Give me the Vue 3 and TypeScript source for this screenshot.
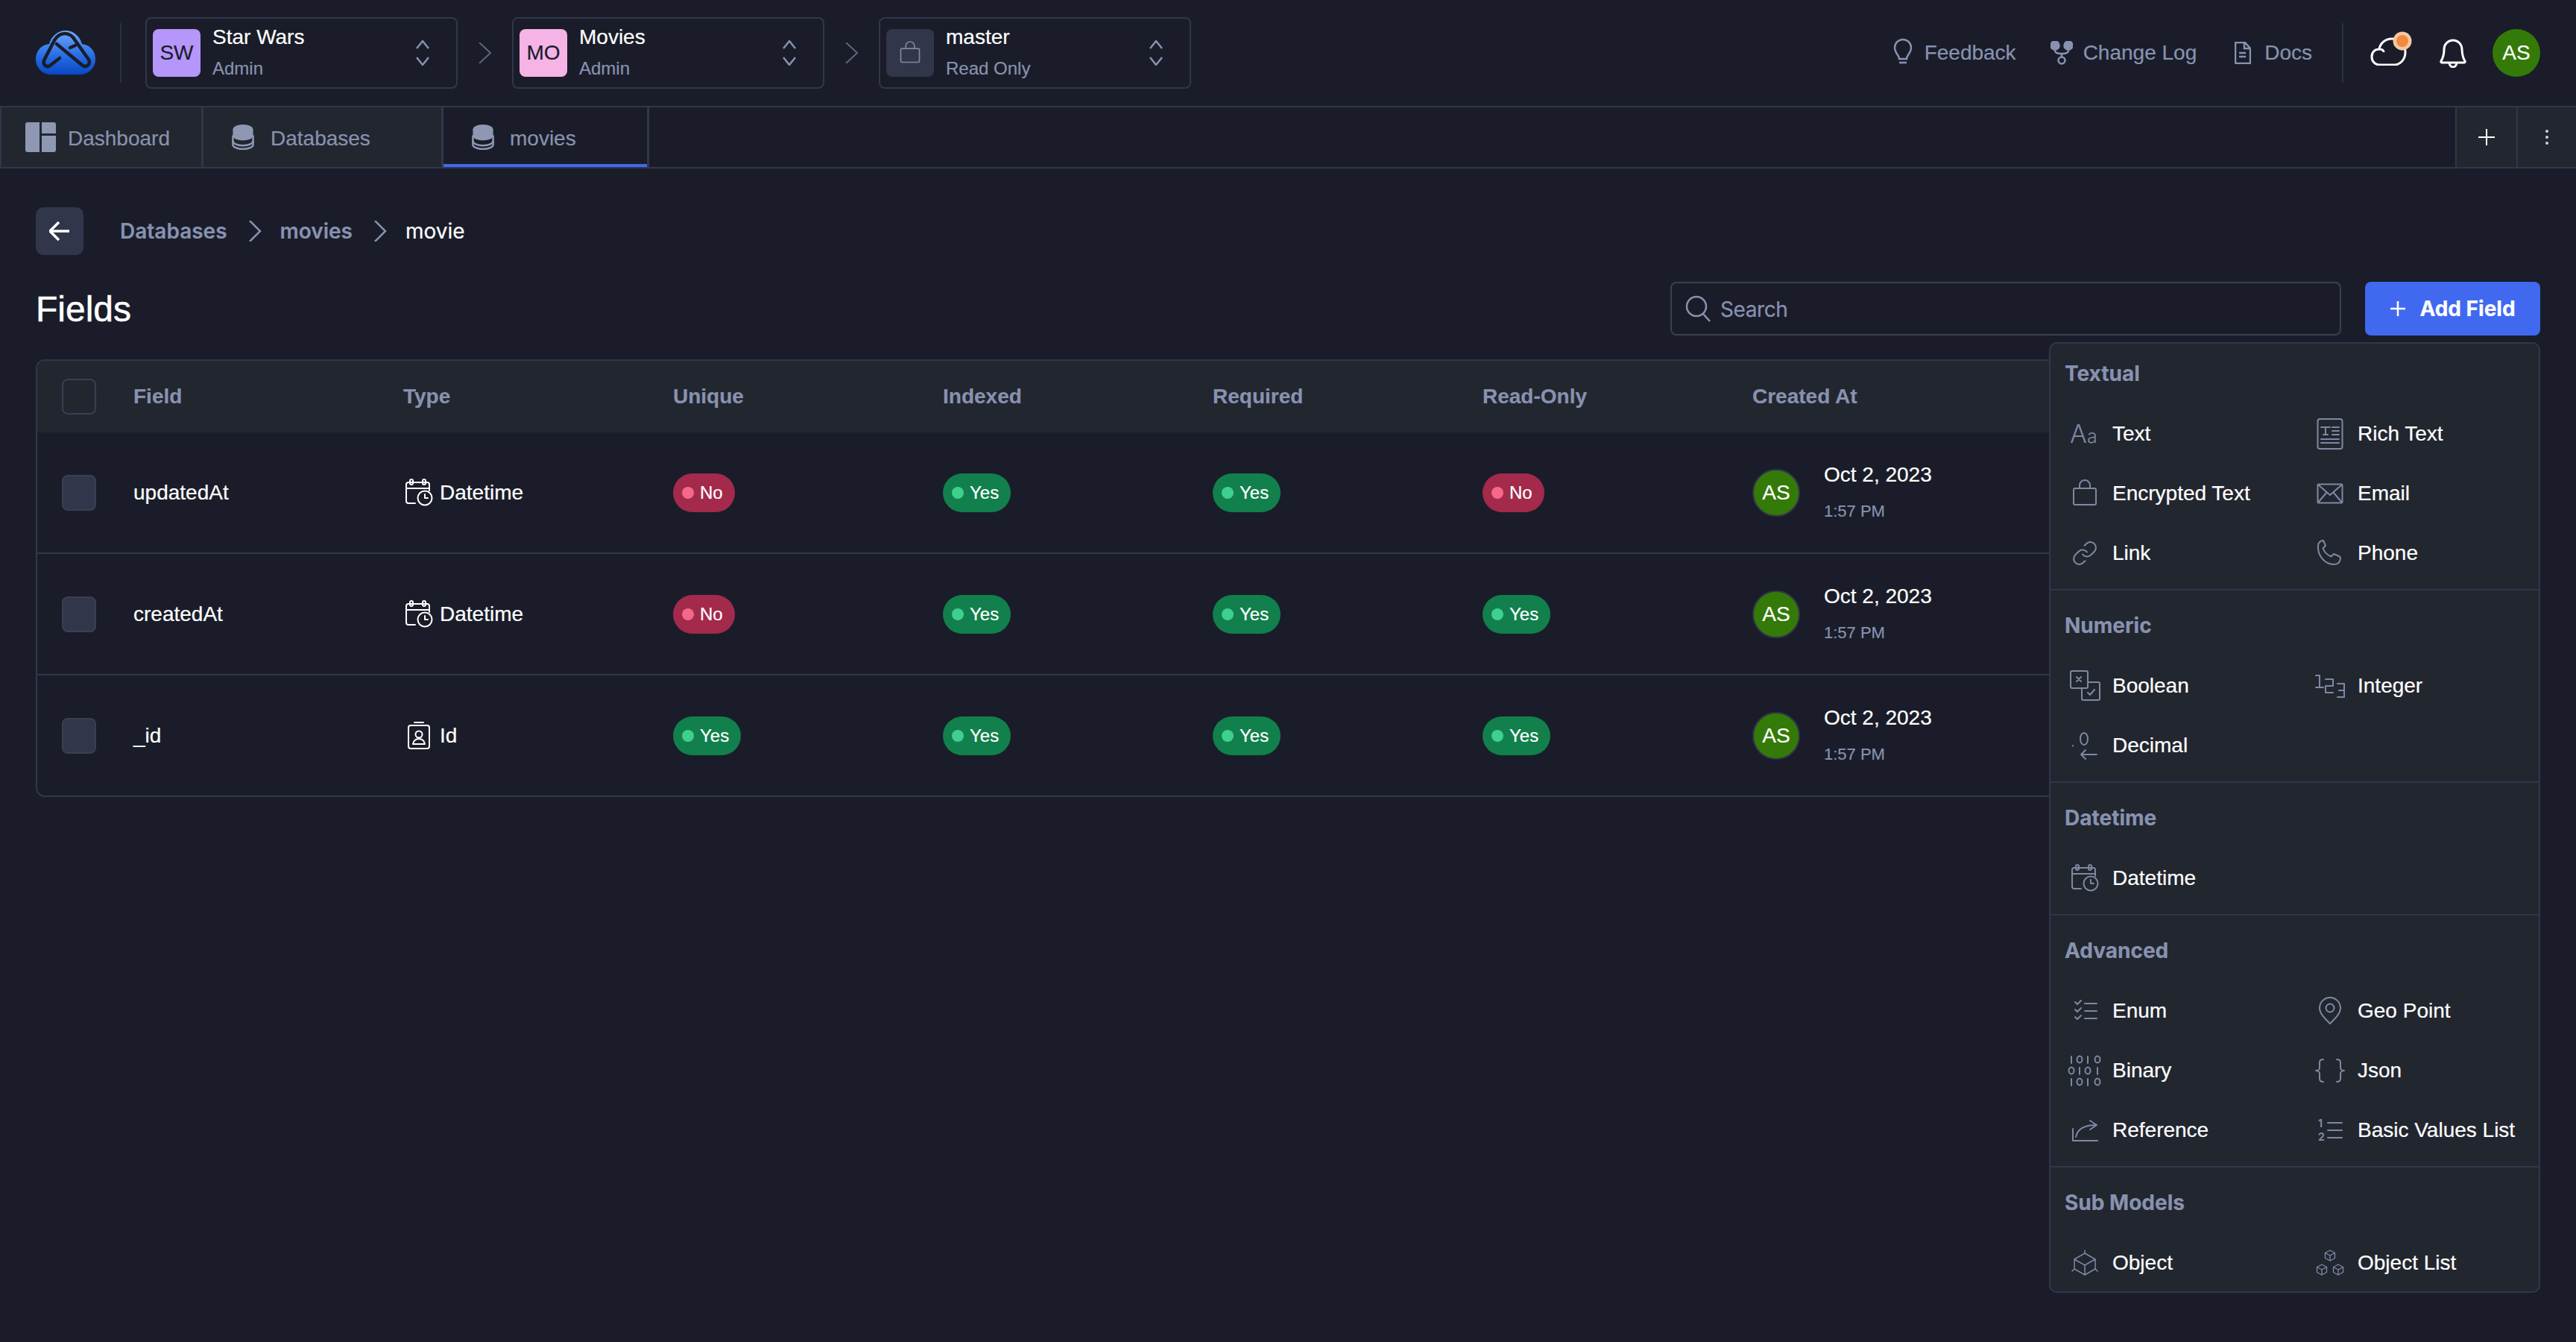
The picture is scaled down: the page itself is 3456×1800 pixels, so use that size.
<script setup lang="ts">
interface Select { badge: string; name: string; role: string; tone: string }
interface Row { name: string; type: string; icon: string; flags: boolean[] }
interface Item { label: string; icon: string }
interface Section { title: string; items: Item[] }

const selects: Select[] = [
  { badge: "SW", name: "Star Wars", role: "Admin", tone: "#b596fb" },
  { badge: "MO", name: "Movies", role: "Admin", tone: "#f5b3e6" },
  { badge: "", name: "master", role: "Read Only", tone: "#31364a" },
];

const columns = ["Field", "Type", "Unique", "Indexed", "Required", "Read-Only", "Created At"];

const rows: Row[] = [
  { name: "updatedAt", type: "Datetime", icon: "datetime", flags: [false, true, true, false] },
  { name: "createdAt", type: "Datetime", icon: "datetime", flags: [false, true, true, true] },
  { name: "_id", type: "Id", icon: "id", flags: [true, true, true, true] },
];

const sections: Section[] = [
  {
    title: "Textual",
    items: [
      { label: "Text", icon: "text" },
      { label: "Rich Text", icon: "rich" },
      { label: "Encrypted Text", icon: "lock" },
      { label: "Email", icon: "email" },
      { label: "Link", icon: "link" },
      { label: "Phone", icon: "phone" },
    ],
  },
  {
    title: "Numeric",
    items: [
      { label: "Boolean", icon: "boolean" },
      { label: "Integer", icon: "integer" },
      { label: "Decimal", icon: "decimal" },
    ],
  },
  { title: "Datetime", items: [{ label: "Datetime", icon: "datetime" }] },
  {
    title: "Advanced",
    items: [
      { label: "Enum", icon: "enum" },
      { label: "Geo Point", icon: "geo" },
      { label: "Binary", icon: "binary" },
      { label: "Json", icon: "json" },
      { label: "Reference", icon: "reference" },
      { label: "Basic Values List", icon: "list" },
    ],
  },
  {
    title: "Sub Models",
    items: [
      { label: "Object", icon: "object" },
      { label: "Object List", icon: "objects" },
    ],
  },
];

const cube = (x: number, y: number) =>
  `<path d="M${x} ${y - 7}l6.5 3.5v7l-6.5 3.5-6.5-3.5v-7zM${x - 6.5} ${y - 3.5}l6.5 3.5 6.5-3.5M${x} ${y}v7"/>`;

// 48x48 icon bodies for the field types
const icons: Record<string, string> = {
  text: `<text x="4" y="36" class="glyph" font-size="34">A</text><text x="27" y="36" class="glyph" font-size="25">a</text>`,
  rich: `<rect x="7.5" y="4" width="33" height="40" rx="3"/><path d="M12 15h12M18 15v10M15 25h6M27 15h9M27 20h9M27 25h9M12 31h24M12 36h24"/>`,
  lock: `<rect x="9" y="17" width="30" height="22" rx="2"/><path d="M17 17v-4a7 7 0 0 1 14 0v4"/>`,
  email: `<rect x="7.5" y="11.5" width="33" height="25" rx="1"/><path d="M8 12l16 14 16-14M8 36l11-13M40 36L29 23"/>`,
  link: `<g transform="translate(6 6) scale(1.5)" stroke-width="1.33"><path d="M10 13a5 5 0 0 0 7.54.54l3-3a5 5 0 0 0-7.07-7.07l-1.72 1.71"/><path d="M14 11a5 5 0 0 0-7.54-.54l-3 3a5 5 0 0 0 7.07 7.07l1.71-1.71"/></g>`,
  phone: `<path d="M15 7l3 7-3.5 3.5c2 5 6 9 11 11l3.500-3.500 7 3c1 .5 2 1.500 2 3-.5 5-4 8-9 8C17 39 7 27 8 14c0-4 3-7 7-7z"/>`,
  boolean: `<rect x="5" y="4" width="23" height="23" rx="2"/><path d="M13 12l6 6M19 12l-6 6M28 19h14a2 2 0 0 1 2 2v20a2 2 0 0 1-2 2H22a2 2 0 0 1-2-2V27M28 33l3 3 6-7"/>`,
  integer: `<path d="M5 10h5v15M5 26h10M18 15h10v9H18v9h10M34 21h9v18h-9M36 30h7"/>`,
  decimal: `<ellipse cx="23" cy="15" rx="5" ry="8"/><path d="M8 24v.5M40 36H19M25 30l-6 6 6 6"/>`,
  datetime: `<path d="M19 38h-9a3 3 0 0 1-3-3V13a3 3 0 0 1 3-3h25a3 3 0 0 1 3 3v8M7 18h31M19 10h7"/><rect x="12" y="6" width="4" height="7" rx="2"/><rect x="29" y="6" width="4" height="7" rx="2"/><circle cx="32" cy="31" r="9.500"/><path d="M32 26v5h4"/>`,
  id: `<rect x="10" y="10" width="28" height="31" rx="3"/><path d="M18 6h12"/><circle cx="24" cy="22" r="4.500"/><path d="M16 35c1-5 4-7 8-7s7 2 8 7z"/>`,
  enum: `<path d="M24 14h16M24 24h16M24 34h16M11 12l3 3 5-5M11 22l3 3 5-5M11 32l3 3 5-5"/>`,
  geo: `<path d="M24 41C16 33 10 27 10 20a14 14 0 0 1 28 0c0 7-6 13-14 21z"/><circle cx="24" cy="20" r="5.500"/>`,
  binary: `<path d="M6 5v9M28 5v9M17 20v9M41 20v9M6 35v9M28 35v9"/><ellipse cx="17" cy="9" rx="3.500" ry="4.500"/><ellipse cx="41" cy="9" rx="3.500" ry="4.500"/><ellipse cx="6" cy="24" rx="3.500" ry="4.500"/><ellipse cx="28" cy="24" rx="3.500" ry="4.500"/><ellipse cx="17" cy="39" rx="3.500" ry="4.500"/><ellipse cx="41" cy="39" rx="3.500" ry="4.500"/>`,
  json: `<path d="M15 9c-3 0-5 1-5 4v7c0 2-2 4-5 4 3 0 5 2 5 4v7c0 3 2 4 5 4M33 9c3 0 5 1 5 4v7c0 2 2 4 5 4-3 0-5 2-5 4v7c0 3-2 4-5 4"/>`,
  reference: `<path d="M8 22v16h33M12 33c2-10 10-16 27-16M31 11l9 6-9 6"/>`,
  list: `<text x="8" y="20" class="digit" font-size="14">1</text><text x="8" y="38" class="digit" font-size="14">2</text><path d="M21 14h19M21 24h19M21 34h19"/>`,
  object: `<g stroke-width="1.500"><path d="M24 11l14 8v13l-14 8-14-8V19zM10 19l14 8 14-8M24 27v13M24 7v4M7 35l3-3M41 35l-3-3"/></g>`,
  objects: `<g stroke-width="1.300">${cube(24, 14)}${cube(13, 33)}${cube(35, 33)}</g>`,
};

const database = `<path class="db-top" d="M1 7c0-4 6-7 14-7s14 3 14 7v9c0 3-6 6-14 6S1 19 1 16z"/><path class="db-band" d="M1 15v8c0 3 6 6 14 6s14-3 14-6v-8"/><path class="db-band" d="M1 22v6c0 3 6 6 14 6s14-3 14-6v-6"/>`;
</script>

<template>
  <div class="page">
    <header class="topbar">
      <svg class="logo" width="80" height="60" viewBox="0 0 80 60">
        <defs>
          <linearGradient id="cloud-fill" x1="0" y1="0" x2="0" y2="1">
            <stop offset="0" stop-color="#6ea8fb" />
            <stop offset="0.55" stop-color="#2a6fe6" />
            <stop offset="1" stop-color="#0747c5" />
          </linearGradient>
        </defs>
        <path
          fill="url(#cloud-fill)"
          d="M18 18C21 7 30 0 40 0s19 7 22 18c10 1 18 9 18 20 0 12-9 21-21 21H21C9 59 0 50 0 38c0-11 8-19 18-20z"
        />
        <path
          fill="none"
          stroke="#1a1d29"
          stroke-width="4.500"
          stroke-linecap="round"
          stroke-linejoin="round"
          d="M32 37L19 47c-4 3-10-1-8-7L25 13c3-5 8-9 14-9s11 4 13 8l19 27c3 6-3 11-8 8L28 18M46 23l7-3"
        />
      </svg>
      <span class="rule"></span>
      <template v-for="(sel, i) in selects" :key="sel.name">
        <svg v-if="i > 0" class="crumb-sep" width="73" height="28" viewBox="0 0 73 28">
          <path d="M29 0l15 14-15 14" />
        </svg>
        <div class="select">
          <span class="select-badge" :style="{ background: sel.tone }">
            {{ sel.badge }}
            <svg v-if="!sel.badge" width="40" height="40" viewBox="0 0 48 48" class="field-icon">
              <g v-html="icons.lock"></g>
            </svg>
          </span>
          <div class="select-text">
            <span class="select-name">{{ sel.name }}</span>
            <span class="select-role">{{ sel.role }}</span>
          </div>
          <svg class="updown" width="18" height="34" viewBox="0 0 18 34">
            <path d="M1 11l8-10 8 10M1 23l8 10 8-10" />
          </svg>
        </div>
      </template>

      <nav class="top-links">
        <a class="top-link">
          <svg width="26" height="40" viewBox="0 0 26 40" class="link-icon">
            <path d="M8 28c0-5-6-8-6-15a11 11 0 0 1 22 0c0 7-6 10-6 15zM8 33h10" />
          </svg>
          Feedback
        </a>
        <a class="top-link top-link-log">
          <svg width="30" height="32" viewBox="0 0 30 32" class="link-icon">
            <circle cx="6" cy="6" r="5.500" fill="currentColor" />
            <circle cx="24" cy="6" r="5.500" fill="currentColor" />
            <circle cx="15" cy="26" r="4.500" />
            <path d="M6 10v3c0 3 3 4 9 4s9-1 9-4v-3M15 17v5" />
          </svg>
          Change Log
        </a>
        <a class="top-link top-link-docs">
          <svg width="22" height="30" viewBox="0 0 22 30" class="link-icon">
            <path d="M2 1h12l7 8v19a1 1 0 0 1-1 1H2a1 1 0 0 1-1-1V2a1 1 0 0 1 1-1zM13 1v8h8M6 15h9M6 20h9" />
          </svg>
          Docs
        </a>
      </nav>
      <span class="rule rule-right"></span>
      <svg class="cloud" width="56" height="46" viewBox="0 0 56 46">
        <path d="M13 45C6 45 2 40 2 34c0-6 4-10 10-10 1-7 7-14 17-14 9 0 18 7 18 18 0 10-7 17-15 17zM13 24c3 0 5 2 5 4" />
        <circle class="cloud-halo" cx="43" cy="13" r="12.500" />
        <circle class="cloud-dot" cx="43" cy="13" r="8" />
      </svg>
      <svg class="bell" width="38" height="40" viewBox="0 0 38 40">
        <path d="M7 15a12 12 0 0 1 24 0c0 8 1 11 4 16 .5 1 0 2-1 2H4c-1 0-1.500-1-1-2 3-5 4-8 4-16zM14 33c0 4 3 6 5 6s5-2 5-6" />
      </svg>
      <span class="avatar avatar-top">AS</span>
    </header>

    <div class="tabs">
      <div class="tab tab-dash">
        <svg width="41" height="40" viewBox="0 0 41 40">
          <path class="tab-fill" d="M3 0h16v40H3a3 3 0 0 1-3-3V3a3 3 0 0 1 3-3zM22 0h16a3 3 0 0 1 3 3v12H22zM22 18h19v19a3 3 0 0 1-3 3H22z" />
        </svg>
        <span class="tab-label">Dashboard</span>
      </div>
      <div class="tab tab-db">
        <svg width="30" height="34" viewBox="0 0 30 35" v-html="database"></svg>
        <span class="tab-label">Databases</span>
      </div>
      <div class="tab tab-active">
        <svg width="30" height="34" viewBox="0 0 30 35" v-html="database"></svg>
        <span class="tab-label">movies</span>
      </div>
      <div class="tab-tools">
        <div class="tool tool-plus">
          <svg width="24" height="24" viewBox="0 0 24 24"><path d="M12 1v22M1 12h22" /></svg>
        </div>
        <div class="tool tool-more">
          <svg width="6" height="22" viewBox="0 0 6 22">
            <circle cx="3" cy="3" r="2" /><circle cx="3" cy="11" r="2" /><circle cx="3" cy="19" r="2" />
          </svg>
        </div>
      </div>
    </div>

    <main class="content">
      <div class="crumbs">
        <button class="back">
          <svg width="28" height="26" viewBox="0 0 28 26"><path d="M27 13H2M13 1L1 13l12 12" /></svg>
        </button>
        <span class="crumb">Databases</span>
        <svg class="crumb-chev" width="18" height="28" viewBox="0 0 18 28"><path d="M2 0l14 14L2 28" /></svg>
        <span class="crumb">movies</span>
        <svg class="crumb-chev" width="18" height="28" viewBox="0 0 18 28"><path d="M2 0l14 14L2 28" /></svg>
        <span class="crumb crumb-now">movie</span>
      </div>

      <div class="title-row">
        <h1>Fields</h1>
        <div class="search">
          <svg width="34" height="36" viewBox="0 0 34 36">
            <circle cx="15" cy="15" r="13" /><path d="M24 25l9 10" />
          </svg>
          <span>Search</span>
        </div>
        <div class="add-wrap">
          <button class="add">
            <svg width="22" height="22" viewBox="0 0 22 22"><path d="M11 1v20M1 11h20" /></svg>
            Add Field
          </button>
          <div class="menu">
            <section v-for="section in sections" :key="section.title" class="menu-section">
              <h3>{{ section.title }}</h3>
              <div class="menu-grid">
                <div v-for="item in section.items" :key="item.label" class="menu-item">
                  <svg width="48" height="48" viewBox="0 0 48 48" class="field-icon" v-html="icons[item.icon]"></svg>
                  <span>{{ item.label }}</span>
                </div>
              </div>
            </section>
          </div>
        </div>
      </div>

      <div class="table">
        <div class="table-row table-head">
          <div class="check-cell"><span class="check check-head"></span></div>
          <div v-for="col in columns" :key="col" class="th">{{ col }}</div>
        </div>
        <div v-for="row in rows" :key="row.name" class="table-row table-body">
          <div class="check-cell"><span class="check"></span></div>
          <div class="td">{{ row.name }}</div>
          <div class="td td-type">
            <svg width="48" height="48" viewBox="0 0 48 48" class="type-icon" v-html="icons[row.icon]"></svg>
            {{ row.type }}
          </div>
          <div v-for="(flag, i) in row.flags" :key="i" class="td">
            <span :class="['pill', flag ? 'pill-yes' : 'pill-no']">
              <i class="pill-dot"></i>{{ flag ? "Yes" : "No" }}
            </span>
          </div>
          <div class="td td-created">
            <span class="avatar avatar-row">AS</span>
            <div class="stamp">
              <span class="stamp-date">Oct 2, 2023</span>
              <span class="stamp-time">1:57 PM</span>
            </div>
          </div>
        </div>
      </div>
    </main>
  </div>
</template>

<style>
body {
  background: #1a1d29;
}
.field-icon .glyph {
  font-family: Inter, sans-serif;
  font-weight: 300;
  fill: #7f88a3;
  stroke: none;
}
.field-icon .digit {
  font-family: Inter, sans-serif;
  font-weight: 700;
  fill: #7f88a3;
  stroke: none;
}
.db-top {
  fill: #8f98b2;
}
.db-band {
  fill: none;
  stroke: #8f98b2;
  stroke-width: 2.5;
}
</style>

<style scoped>
.page {
  width: 3456px;
  min-height: 1800px;
  background: #1a1d29;
  color: #fff;
  font-family: "Liberation Sans", Arial, sans-serif;
  font-size: 28px;
  -webkit-text-stroke: 0.2px;
  overflow: hidden;
}

.topbar {
  height: 142px;
  display: flex;
  align-items: center;
  padding: 0 48px;
}
.logo {
  flex: none;
  margin-right: 33px;
}
.rule {
  width: 2px;
  height: 80px;
  background: #2b2f3f;
  flex: none;
  margin-right: 32px;
}
.crumb-sep {
  flex: none;
}
.crumb-sep path {
  fill: none;
  stroke: #5d6681;
  stroke-width: 2;
}
.select {
  width: 419px;
  height: 96px;
  flex: none;
  box-sizing: border-box;
  border: 2px solid #31364a;
  border-radius: 8px;
  display: flex;
  align-items: center;
  padding: 0 36px 0 8px;
}
.select-badge {
  width: 64px;
  height: 64px;
  border-radius: 8px;
  flex: none;
  color: #1a1d29;
  font-size: 28px;
  display: flex;
  align-items: center;
  justify-content: center;
}
.select-text {
  flex: 1;
  display: flex;
  flex-direction: column;
  margin-left: 16px;
  gap: 14px;
  margin-top: -1px;
}
.select-name {
  font-size: 28px;
  line-height: 28px;
}
.select-role {
  font-size: 24px;
  line-height: 28px;
  color: #8892b0;
}
.updown {
  flex: none;
}
.updown path {
  fill: none;
  stroke: #8892b0;
  stroke-width: 2.5;
}

.top-links {
  margin-left: auto;
  display: flex;
  align-items: center;
  gap: 48px;
  margin-right: 40px;
}
.top-link {
  display: flex;
  align-items: center;
  gap: 16px;
  color: #8892b0;
  font-size: 28px;
}
.top-link-log {
  gap: 14px;
  margin: 0 3px 0 -2px;
}
.top-link-docs {
  gap: 18px;
}
.link-icon {
  fill: none;
  stroke: #8892b0;
  stroke-width: 2.5;
  color: #8892b0;
}
.rule-right {
  margin-right: 36px;
}
.cloud {
  flex: none;
  margin-top: -12px;
  margin-right: 36px;
}
.cloud path {
  fill: none;
  stroke: #fff;
  stroke-width: 3;
}
.cloud-halo {
  fill: #f5c7a4;
}
.cloud-dot {
  fill: #f18a3b;
}
.bell {
  flex: none;
  margin-right: 34px;
}
.bell path {
  fill: none;
  stroke: #fff;
  stroke-width: 3;
  stroke-linejoin: round;
}
.avatar {
  border-radius: 50%;
  background: #347a09;
  color: #fff;
  display: flex;
  align-items: center;
  justify-content: center;
  flex: none;
}
.avatar-top {
  width: 64px;
  height: 64px;
}

.tabs {
  height: 80px;
  display: flex;
  border-top: 2px solid #31364a;
  border-bottom: 2px solid #31364a;
}
.tab {
  display: flex;
  align-items: center;
  color: #8892b0;
  font-size: 28px;
  border-right: 3px solid #31364a;
  box-sizing: border-box;
  height: 80px;
}
.tab svg {
  flex: none;
}
.tab-label {
  margin-top: 3px;
}
.tab-fill {
  fill: #8f98b2;
}
.tab-dash {
  width: 273px;
  background: #22262f;
  border-left: 2px solid #31364a;
  padding-left: 32px;
  gap: 16px;
}
.tab-db {
  width: 322px;
  background: #22262f;
  padding-left: 38px;
  gap: 22px;
}
.tab-active {
  width: 276px;
  padding-left: 38px;
  gap: 21px;
  box-shadow: inset 0 -4px 0 #4169f0;
}
.tab-tools {
  margin-left: auto;
  display: flex;
}
.tool {
  height: 80px;
  background: #22262f;
  border-left: 2px solid #31364a;
  display: flex;
  align-items: center;
  justify-content: center;
  box-sizing: border-box;
}
.tool-plus {
  width: 82px;
}
.tool-more {
  width: 80px;
}
.tool path {
  stroke: #fff;
  stroke-width: 2;
  fill: none;
}
.tool circle {
  fill: #cfd3de;
}

.content {
  padding: 52px 48px 0;
}
.crumbs {
  display: flex;
  align-items: center;
  height: 64px;
}
.back {
  width: 64px;
  height: 64px;
  background: #31364a;
  border: 0;
  border-radius: 10px;
  padding: 0;
  display: flex;
  align-items: center;
  justify-content: center;
  margin-right: 49px;
}
.back path {
  fill: none;
  stroke: #fff;
  stroke-width: 3.5;
}
.crumb {
  font-family: Inter, sans-serif;
  font-size: 28px;
  font-weight: 600;
  color: #8892b0;
}
.crumb-now {
  color: #fff;
  font-weight: 400;
}
.crumb-chev {
  margin: 0 25px 0 28px;
  flex: none;
}
.crumb-chev path {
  fill: none;
  stroke: #8892b0;
  stroke-width: 2.5;
}

.title-row {
  display: flex;
  align-items: center;
  margin-top: 36px;
  height: 72px;
}
h1 {
  margin: 0;
  font-size: 48px;
  font-weight: 400;
  -webkit-text-stroke: 0.5px;
  flex: 1;
}
.search {
  width: 900px;
  height: 72px;
  box-sizing: border-box;
  border: 2px solid #3a3f52;
  border-radius: 8px;
  display: flex;
  align-items: center;
  gap: 13px;
  padding-left: 18px;
  color: #8892b0;
  margin-right: 32px;
  font-family: Inter, sans-serif;
  letter-spacing: -0.4px;
}
.search span {
  padding-top: 2px;
}
.search svg {
  fill: none;
  stroke: #8892b0;
  stroke-width: 2.5;
  flex: none;
}
.add-wrap {
  position: relative;
  flex: none;
}
.add {
  width: 235px;
  height: 72px;
  border: 0;
  border-radius: 8px;
  background: #4169f0;
  color: #fff;
  font-family: Inter, sans-serif;
  font-size: 28px;
  font-weight: 700;
  display: flex;
  align-items: center;
  justify-content: center;
  gap: 18px;
}
.add path {
  fill: none;
  stroke: #fff;
  stroke-width: 2.5;
}

.menu {
  position: absolute;
  top: 81px;
  right: 0;
  z-index: 5;
  width: 659px;
  box-sizing: border-box;
  background: #22262f;
  border: 2px solid #31364a;
  border-radius: 10px;
}
.menu-section {
  padding: 27px 0 8px;
  border-top: 2px solid #31364a;
}
.menu-section:first-child {
  padding-top: 20px;
  border-top: 0;
}
.menu-section:last-child {
  padding-bottom: 0;
}
h3 {
  margin: 0 0 21px 19px;
  height: 40px;
  line-height: 40px;
  font-family: Inter, sans-serif;
  font-size: 28px;
  font-weight: 700;
  color: #8892b0;
}
.menu-grid {
  display: grid;
  grid-template-columns: 329px 1fr;
  padding-left: 22px;
}
.menu-section:last-child .menu-grid {
  margin-bottom: -2px;
}
.menu-item {
  height: 80px;
  display: flex;
  align-items: center;
  gap: 13px;
  font-size: 28px;
  white-space: nowrap;
}
.field-icon {
  flex: none;
  fill: none;
  stroke: #7f88a3;
  stroke-width: 2;
  stroke-linecap: round;
  stroke-linejoin: round;
}

.table {
  margin-top: 32px;
  border: 2px solid #31364a;
  border-radius: 12px;
  overflow: hidden;
}
.table-row {
  display: grid;
  grid-template-columns: 129px repeat(6, 362px) 1fr;
  align-items: center;
}
.table-head {
  height: 96px;
  background: #22262f;
}
.table-body {
  height: 161px;
  border-top: 2px solid #31364a;
}
.table-head + .table-body {
  border-top: 0;
}
.check-cell {
  padding-left: 33px;
  display: flex;
}
.check {
  width: 46px;
  height: 48px;
  box-sizing: border-box;
  border-radius: 8px;
  background: #31364a;
  border: 2px solid #3a3f52;
}
.check-head {
  background: transparent;
}
.th {
  font-weight: 700;
  color: #8892b0;
}
.td-type {
  display: flex;
  align-items: center;
  gap: 4px;
}
.type-icon {
  flex: none;
  margin-left: -3px;
  fill: none;
  stroke: #fff;
  stroke-width: 2;
  stroke-linecap: round;
  stroke-linejoin: round;
}
.pill {
  display: inline-flex;
  align-items: center;
  height: 52px;
  padding: 0 16px 0 12px;
  border-radius: 26px;
  font-size: 24px;
  gap: 8px;
}
.pill-dot {
  width: 16px;
  height: 16px;
  border-radius: 50%;
}
.pill-yes {
  background: #11804c;
}
.pill-yes .pill-dot {
  background: #3fcf8e;
}
.pill-no {
  background: #a32a4b;
}
.pill-no .pill-dot {
  background: #f4688a;
}
.td-created {
  display: flex;
  align-items: center;
  gap: 32px;
}
.avatar-row {
  width: 64px;
  height: 64px;
  box-sizing: border-box;
  border: 2px solid #31364a;
}
.stamp {
  display: flex;
  flex-direction: column;
  gap: 18px;
  margin-top: -2px;
}
.stamp-date {
  line-height: 34px;
}
.stamp-time {
  font-size: 22px;
  line-height: 28px;
  color: #8892b0;
}
</style>
